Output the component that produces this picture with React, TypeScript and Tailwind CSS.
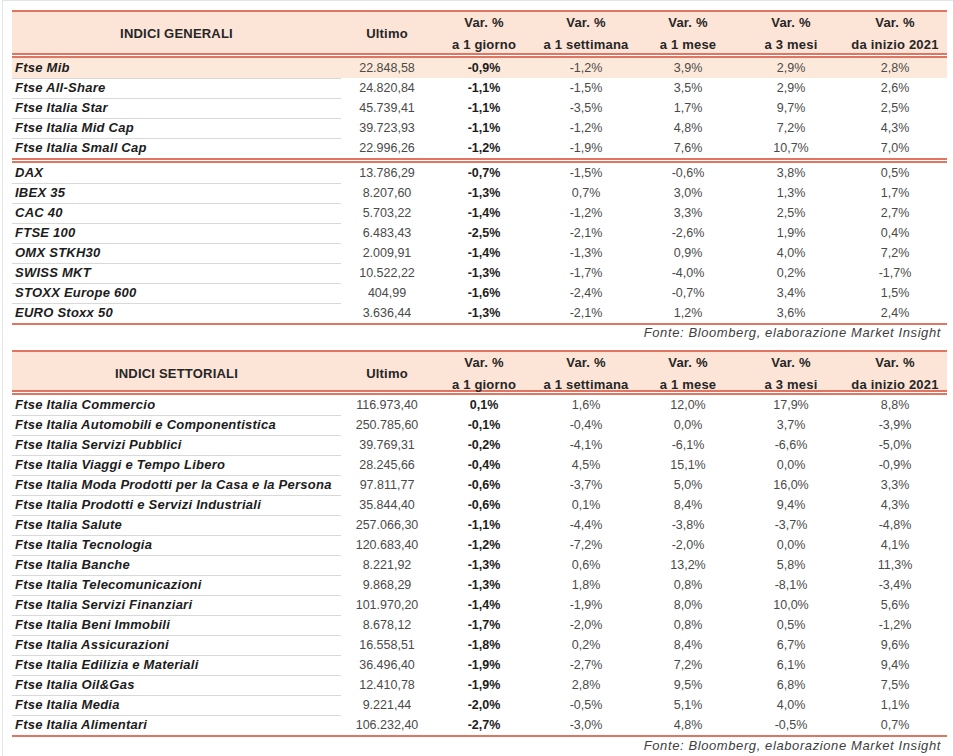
import React from 'react';

type Row = [string, string, string, string, string, string, string];

const cols = 'grid grid-cols-[329px_92px_102px_102px_102px_104px_104px]';

const generali: Row[] = [
  ['Ftse Mib', '22.848,58', '-0,9%', '-1,2%', '3,9%', '2,9%', '2,8%'],
  ['Ftse All-Share', '24.820,84', '-1,1%', '-1,5%', '3,5%', '2,9%', '2,6%'],
  ['Ftse Italia Star', '45.739,41', '-1,1%', '-3,5%', '1,7%', '9,7%', '2,5%'],
  ['Ftse Italia Mid Cap', '39.723,93', '-1,1%', '-1,2%', '4,8%', '7,2%', '4,3%'],
  ['Ftse Italia Small Cap', '22.996,26', '-1,2%', '-1,9%', '7,6%', '10,7%', '7,0%'],
];

const esteri: Row[] = [
  ['DAX', '13.786,29', '-0,7%', '-1,5%', '-0,6%', '3,8%', '0,5%'],
  ['IBEX 35', '8.207,60', '-1,3%', '0,7%', '3,0%', '1,3%', '1,7%'],
  ['CAC 40', '5.703,22', '-1,4%', '-1,2%', '3,3%', '2,5%', '2,7%'],
  ['FTSE 100', '6.483,43', '-2,5%', '-2,1%', '-2,6%', '1,9%', '0,4%'],
  ['OMX STKH30', '2.009,91', '-1,4%', '-1,3%', '0,9%', '4,0%', '7,2%'],
  ['SWISS MKT', '10.522,22', '-1,3%', '-1,7%', '-4,0%', '0,2%', '-1,7%'],
  ['STOXX Europe 600', '404,99', '-1,6%', '-2,4%', '-0,7%', '3,4%', '1,5%'],
  ['EURO Stoxx 50', '3.636,44', '-1,3%', '-2,1%', '1,2%', '3,6%', '2,4%'],
];

const settoriali: Row[] = [
  ['Ftse Italia Commercio', '116.973,40', '0,1%', '1,6%', '12,0%', '17,9%', '8,8%'],
  ['Ftse Italia Automobili e Componentistica', '250.785,60', '-0,1%', '-0,4%', '0,0%', '3,7%', '-3,9%'],
  ['Ftse Italia Servizi Pubblici', '39.769,31', '-0,2%', '-4,1%', '-6,1%', '-6,6%', '-5,0%'],
  ['Ftse Italia Viaggi e Tempo Libero', '28.245,66', '-0,4%', '4,5%', '15,1%', '0,0%', '-0,9%'],
  ['Ftse Italia Moda Prodotti per la Casa e la Persona', '97.811,77', '-0,6%', '-3,7%', '5,0%', '16,0%', '3,3%'],
  ['Ftse Italia Prodotti e Servizi Industriali', '35.844,40', '-0,6%', '0,1%', '8,4%', '9,4%', '4,3%'],
  ['Ftse Italia Salute', '257.066,30', '-1,1%', '-4,4%', '-3,8%', '-3,7%', '-4,8%'],
  ['Ftse Italia Tecnologia', '120.683,40', '-1,2%', '-7,2%', '-2,0%', '0,0%', '4,1%'],
  ['Ftse Italia Banche', '8.221,92', '-1,3%', '0,6%', '13,2%', '5,8%', '11,3%'],
  ['Ftse Italia Telecomunicazioni', '9.868,29', '-1,3%', '1,8%', '0,8%', '-8,1%', '-3,4%'],
  ['Ftse Italia Servizi Finanziari', '101.970,20', '-1,4%', '-1,9%', '8,0%', '10,0%', '5,6%'],
  ['Ftse Italia Beni Immobili', '8.678,12', '-1,7%', '-2,0%', '0,8%', '0,5%', '-1,2%'],
  ['Ftse Italia Assicurazioni', '16.558,51', '-1,8%', '0,2%', '8,4%', '6,7%', '9,6%'],
  ['Ftse Italia Edilizia e Materiali', '36.496,40', '-1,9%', '-2,7%', '7,2%', '6,1%', '9,4%'],
  ['Ftse Italia Oil&Gas', '12.410,78', '-1,9%', '2,8%', '9,5%', '6,8%', '7,5%'],
  ['Ftse Italia Media', '9.221,44', '-2,0%', '-0,5%', '5,1%', '4,0%', '1,1%'],
  ['Ftse Italia Alimentari', '106.232,40', '-2,7%', '-3,0%', '4,8%', '-0,5%', '0,7%'],
];

const periods = ['a 1 giorno', 'a 1 settimana', 'a 1 mese', 'a 3 mesi', 'da inizio 2021'];

const DoubleLine = () => <div className="h-[5px] border-y-2 border-[#df7563]" />;

const Header = ({ title, tall }: { title: string; tall?: boolean }) => (
  <>
    <div className="h-[2px] bg-[#df7563]" />
    <div
      className={`${cols} bg-[#fce4d6] font-bold text-[13px] tracking-[0.2px] text-[#262626] ${tall ? 'h-[41px]' : 'h-[38px]'}`}
    >
      <div className="flex items-center justify-center">{title}</div>
      <div className="flex items-center justify-center">Ultimo</div>
      {periods.map((p) => (
        <div key={p} className="flex flex-col items-center justify-center leading-[22px]">
          <span>Var. %</span>
          <span>{p}</span>
        </div>
      ))}
    </div>
    <DoubleLine />
  </>
);

const DataRows = ({ rows, highlightFirst }: { rows: Row[]; highlightFirst?: boolean }) => (
  <div>
    {rows.map((r, i) => {
      const last = i === rows.length - 1;
      return (
        <div
          key={r[0]}
          className={`${cols} h-[20px] items-stretch text-[12.5px] ${highlightFirst && i === 0 ? 'bg-[#fde9d9]' : ''}`}
        >
          <div
            className={`flex items-center pl-[3px] text-[13px] tracking-[0.25px] font-bold italic text-[#1c1c1c] whitespace-nowrap ${last ? '' : 'border-b border-[#d9d9d9]'}`}
          >
            {r[0]}
          </div>
          <div className="flex items-center justify-center text-[#4a4a4a]">{r[1]}</div>
          <div className="flex items-center justify-center font-bold text-[#1c1c1c]">{r[2]}</div>
          {r.slice(3).map((v, j) => (
            <div key={j} className="flex items-center justify-center text-[#4a4a4a]">
              {v}
            </div>
          ))}
        </div>
      );
    })}
  </div>
);

const Fonte = () => (
  <div className="text-right pr-[6px] italic text-[13px] tracking-[0.6px] leading-[15px] text-[#404040] whitespace-nowrap">
    Fonte: Bloomberg, elaborazione Market Insight
  </div>
);

export default function App() {
  return (
    <div
      className="w-[953px] h-[756px] bg-white overflow-hidden border-t border-l border-[#dfe6e4] ml-[2px]"
      style={{ fontFamily: '"Liberation Sans", Arial, sans-serif' }}
    >
      <div className="ml-[9px] w-[935px] pt-[9px]">
        {/* Indici generali */}
        <Header title="INDICI GENERALI" tall />
        <DataRows rows={generali} highlightFirst />
        <DoubleLine />
        <DataRows rows={esteri} />
        <div className="h-[2px] bg-[#df7563]" />
        <Fonte />

        <div className="h-[10px]" />

        {/* Indici settoriali */}
        <Header title="INDICI SETTORIALI" />
        <DataRows rows={settoriali} />
        <div className="h-[2px] bg-[#df7563]" />
        <div className="h-[1px]" />
        <Fonte />
      </div>
    </div>
  );
}
